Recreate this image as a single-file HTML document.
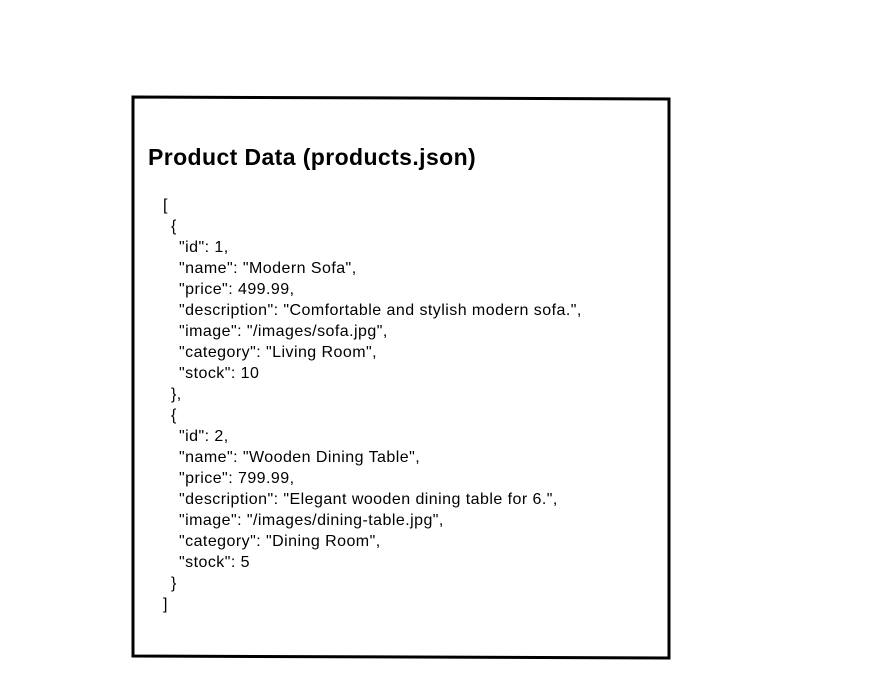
<!DOCTYPE html>
<html><head><style>
body{margin:0;width:882px;height:696px;background:#fff;position:relative;font-family:"Liberation Sans",sans-serif;color:#000;overflow:hidden}
svg{position:absolute;left:0;top:0}
h1{position:absolute;left:148px;top:144px;margin:0;font-size:23px;font-weight:bold;letter-spacing:0.4px;white-space:nowrap}
.c{position:absolute;left:0;top:195px;font-size:16px;line-height:21px;letter-spacing:0.45px}
.c div{white-space:nowrap;height:21px}
.a{padding-left:163px}.b{padding-left:171px}.k{padding-left:179px}
</style></head><body>
<svg width="882" height="696"><polygon points="133,97 669,99 669,658 133,656" fill="none" stroke="#000" stroke-width="3"/></svg>
<h1>Product Data (products.json)</h1>
<div class="c"><div class="a">[</div><div class="b">{</div><div class="k">"id": 1,</div><div class="k">"name": "Modern Sofa",</div><div class="k">"price": 499.99,</div><div class="k">"description": "Comfortable and stylish modern sofa.",</div><div class="k">"image": "/images/sofa.jpg",</div><div class="k">"category": "Living Room",</div><div class="k">"stock": 10</div><div class="b">},</div><div class="b">{</div><div class="k">"id": 2,</div><div class="k">"name": "Wooden Dining Table",</div><div class="k">"price": 799.99,</div><div class="k">"description": "Elegant wooden dining table for 6.",</div><div class="k">"image": "/images/dining-table.jpg",</div><div class="k">"category": "Dining Room",</div><div class="k">"stock": 5</div><div class="b">}</div><div class="a">]</div></div>
</body></html>
